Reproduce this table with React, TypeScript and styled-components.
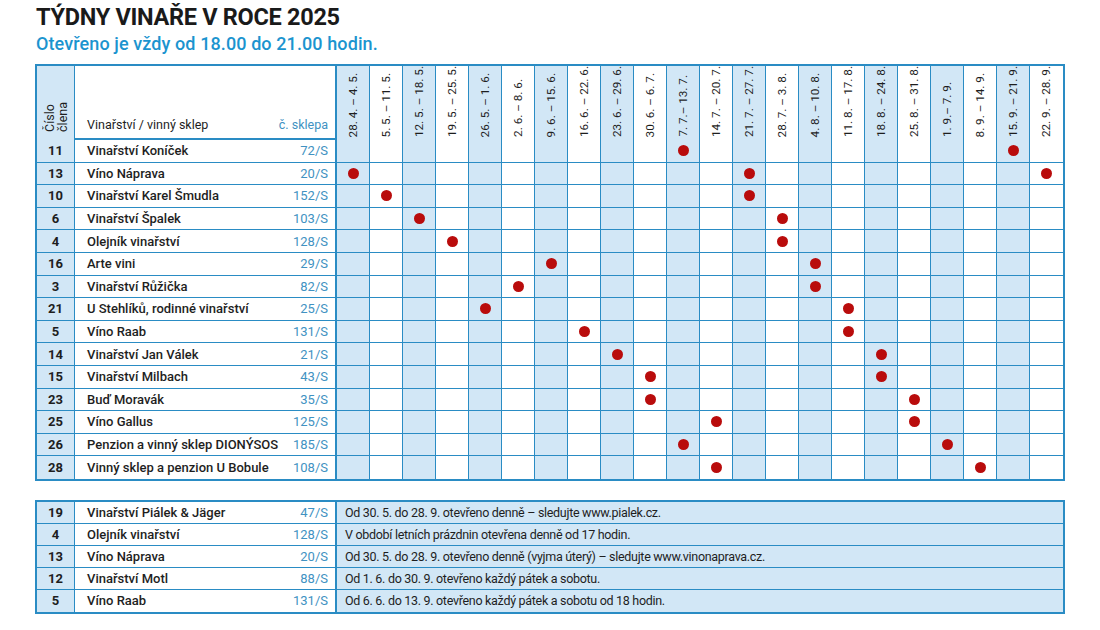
import React from "react";
import styled, { createGlobalStyle } from "styled-components";

const BLUE = "#2a8cc4";
const FILL = "#d2e7f6";
const INK = "#1e1e1e";
const NUM_BLUE = "#4192c2";
const RED = "#b90c0c";
const FONT = `Roboto, "Liberation Sans", Arial, sans-serif`;

const Global = createGlobalStyle`
  html, body { margin: 0; padding: 0; background: #fff; }
  body { font-family: ${FONT}; color: ${INK}; }
`;

const Page = styled.div`
  width: 1100px;
  height: 630px;
  padding: 4px 0 0 35px;
  box-sizing: border-box;
  overflow: hidden;
`;

const Title = styled.h1`
  margin: 0 0 0 1px;
  font-size: 23.5px;
  line-height: 26px;
  font-weight: 700;
  letter-spacing: -0.3px;
  color: #1a1a1a;
`;

const Subtitle = styled.h2`
  margin: 4px 0 0 1px;
  font-size: 18px;
  line-height: 20px;
  font-weight: 500;
  color: #1b94cf;
  letter-spacing: 0.1px;
`;

const Table = styled.div<{ $top: number }>`
  margin-top: ${(p) => p.$top}px;
  width: 1030px;
  border: 2px solid ${BLUE};
  box-sizing: border-box;
`;

const cols = `38px 262px repeat(22, 33px)`;

const Row = styled.div<{ $h: number; $last?: boolean; $cols?: string }>`
  display: grid;
  grid-template-columns: ${(p) => p.$cols ?? cols};
  height: ${(p) => p.$h}px;
  box-sizing: border-box;
  border-bottom: ${(p) => (p.$last ? "none" : `1px solid ${BLUE}`)};
`;

const HeaderRow = styled(Row)`
  border-bottom: 2px solid ${BLUE};
`;

const NumCell = styled.div`
  background: ${FILL};
  border-right: 1px solid ${BLUE};
  display: flex;
  align-items: center;
  justify-content: center;
  font-size: 13px;
  font-weight: 700;
  color: ${INK};
`;

const NameCell = styled.div`
  border-right: 2px solid ${BLUE};
  display: flex;
  align-items: center;
  justify-content: space-between;
  padding: 0 7px 0 12px;
  font-size: 13px;
  font-weight: 500;
  color: ${INK};
  white-space: nowrap;
`;

const Sklep = styled.span`
  color: ${NUM_BLUE};
  font-weight: 400;
`;

const DateCell = styled.div<{ $shade: boolean; $end: boolean }>`
  background: ${(p) => (p.$shade ? FILL : "#fff")};
  border-right: ${(p) => (p.$end ? "none" : `1px solid ${BLUE}`)};
  display: flex;
  align-items: center;
  justify-content: center;
`;

const HeadNum = styled(NumCell)`
  align-items: flex-end;
  padding-bottom: 10px;
  font-size: 12.5px;
  font-weight: 400;
`;

const VerticalText = styled.div`
  writing-mode: vertical-rl;
  transform: rotate(180deg);
  line-height: 13px;
  white-space: nowrap;
`;

const HeadName = styled(NameCell)`
  align-items: flex-end;
  padding-bottom: 10px;
  font-size: 12.5px;
  font-weight: 400;
`;

const HeadDate = styled(DateCell)`
  align-items: flex-end;
  padding-bottom: 5px;
  font-size: 11.7px;
  color: ${INK};
`;

const Dot = styled.span`
  width: 11px;
  height: 11px;
  border-radius: 50%;
  background: ${RED};
`;

const Desc = styled.div`
  background: ${FILL};
  display: flex;
  align-items: center;
  padding-left: 8px;
  font-size: 12.5px;
  letter-spacing: -0.3px;
  font-weight: 400;
  color: ${INK};
  white-space: nowrap;
`;

const weeks = [
  "28. 4. – 4. 5.",
  "5. 5. – 11. 5.",
  "12. 5. – 18. 5.",
  "19. 5. – 25. 5.",
  "26. 5. – 1. 6.",
  "2. 6. – 8. 6.",
  "9. 6. – 15. 6.",
  "16. 6. – 22. 6.",
  "23. 6. – 29. 6.",
  "30. 6. – 6. 7.",
  "7. 7.– 13. 7.",
  "14. 7. – 20. 7.",
  "21. 7. – 27. 7.",
  "28. 7. – 3. 8.",
  "4. 8. – 10. 8.",
  "11. 8. – 17. 8.",
  "18. 8. – 24. 8.",
  "25. 8. – 31. 8.",
  "1. 9.– 7. 9.",
  "8. 9. – 14. 9.",
  "15. 9. – 21. 9.",
  "22. 9. – 28. 9.",
];

type Entry = [string, string, string, number[]];

const rows: Entry[] = [
  ["11", "Vinařství Koníček", "72/S", [10, 20]],
  ["13", "Víno Náprava", "20/S", [0, 12, 21]],
  ["10", "Vinařství Karel Šmudla", "152/S", [1, 12]],
  ["6", "Vinařství Špalek", "103/S", [2, 13]],
  ["4", "Olejník vinařství", "128/S", [3, 13]],
  ["16", "Arte vini", "29/S", [6, 14]],
  ["3", "Vinařství Růžička", "82/S", [5, 14]],
  ["21", "U Stehlíků, rodinné vinařství", "25/S", [4, 15]],
  ["5", "Víno Raab", "131/S", [7, 15]],
  ["14", "Vinařství Jan Válek", "21/S", [8, 16]],
  ["15", "Vinařství Milbach", "43/S", [9, 16]],
  ["23", "Buď Moravák", "35/S", [9, 17]],
  ["25", "Víno Gallus", "125/S", [11, 17]],
  ["26", "Penzion a vinný sklep DIONÝSOS", "185/S", [10, 18]],
  ["28", "Vinný sklep a penzion U Bobule", "108/S", [11, 19]],
];

const extra: [string, string, string, string][] = [
  ["19", "Vinařství Piálek & Jäger", "47/S", "Od 30. 5. do 28. 9. otevřeno denně – sledujte www.pialek.cz."],
  ["4", "Olejník vinařství", "128/S", "V období letních prázdnin otevřena denně od 17 hodin."],
  ["13", "Víno Náprava", "20/S", "Od 30. 5. do 28. 9. otevřeno denně (vyjma úterý) – sledujte www.vinonaprava.cz."],
  ["12", "Vinařství Motl", "88/S", "Od 1. 6. do 30. 9. otevřeno každý pátek a sobotu."],
  ["5", "Víno Raab", "131/S", "Od 6. 6. do 13. 9. otevřeno každý pátek a sobotu od 18 hodin."],
];

export default function App() {
  return (
    <>
      <Global />
      <Page>
        <Title>TÝDNY VINAŘE V ROCE 2025</Title>
        <Subtitle>Otevřeno je vždy od 18.00 do 21.00 hodin.</Subtitle>

        <Table $top={10}>
          <HeaderRow $h={74}>
            <HeadNum>
              <VerticalText>
                Číslo
                <br />
                člena
              </VerticalText>
            </HeadNum>
            <HeadName>
              <span>Vinařství / vinný sklep</span>
              <Sklep>č. sklepa</Sklep>
            </HeadName>
            {weeks.map((w, i) => (
              <HeadDate key={w} $shade={i % 2 === 0} $end={i === weeks.length - 1}>
                <VerticalText>{w}</VerticalText>
              </HeadDate>
            ))}
          </HeaderRow>
          {rows.map(([num, name, sklep, dots], r) => (
            <Row key={num + name} $h={22.6} $last={r === rows.length - 1}>
              <NumCell>{num}</NumCell>
              <NameCell>
                <span>{name}</span>
                <Sklep>{sklep}</Sklep>
              </NameCell>
              {weeks.map((w, i) => (
                <DateCell key={w} $shade={i % 2 === 0} $end={i === weeks.length - 1}>
                  {dots.includes(i) && <Dot />}
                </DateCell>
              ))}
            </Row>
          ))}
        </Table>

        <Table $top={19}>
          {extra.map(([num, name, sklep, text], r) => (
            <Row key={num + name} $h={22} $last={r === extra.length - 1} $cols="38px 262px 1fr">
              <NumCell>{num}</NumCell>
              <NameCell>
                <span>{name}</span>
                <Sklep>{sklep}</Sklep>
              </NameCell>
              <Desc>{text}</Desc>
            </Row>
          ))}
        </Table>
      </Page>
    </>
  );
}
